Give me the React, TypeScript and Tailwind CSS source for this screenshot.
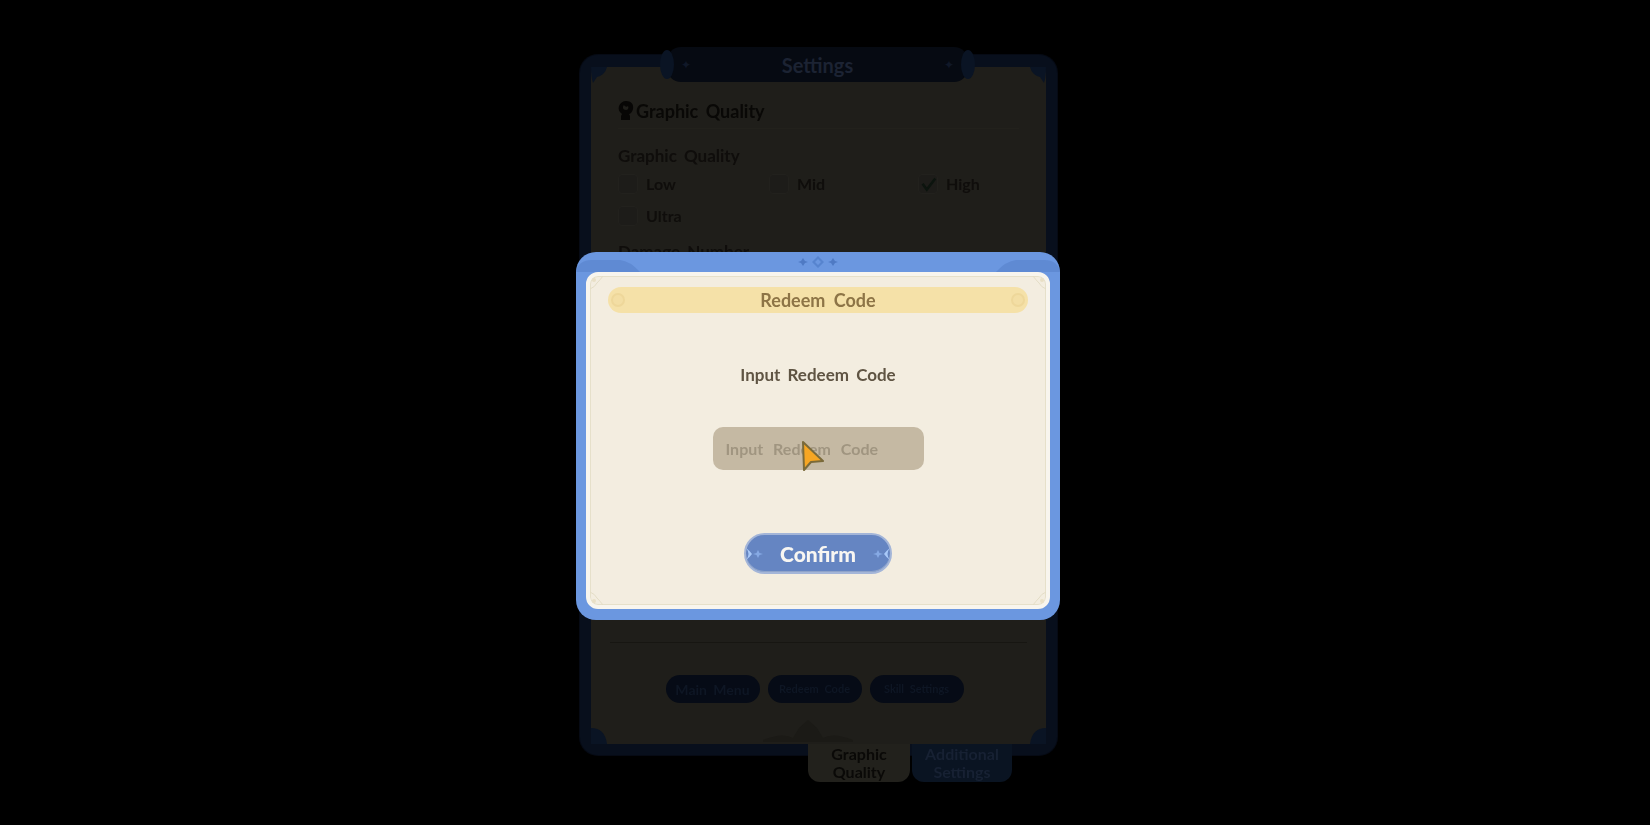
import React from "react";

function Check({ label, checked }: { label: string; checked?: boolean }) {
  return (
    <div className="flex items-center gap-[8px]">
      <div className="relative h-[20px] w-[20px] rounded-[4px] bg-[#1d1c19] border border-[#22211d]">
        {checked && (
          <svg viewBox="0 0 20 20" className="absolute left-[1px] top-[1px] h-[17px] w-[17px]">
            <path d="M3 9 L8 16 L18 3" stroke="#0c140e" strokeWidth="3" fill="none" />
          </svg>
        )}
      </div>
      <span className="text-[16px] font-bold text-[#0f0d0b] [word-spacing:3px]">{label}</span>
    </div>
  );
}

function SmallButton({ label, size }: { label: string; size: string }) {
  return (
    <div className={`flex h-[28px] w-[94px] items-center justify-center rounded-full bg-[#060b16] font-bold text-[#0e1624] [word-spacing:3px] ${size}`}>
      {label}
    </div>
  );
}

function TopCorner({ className }: { className: string }) {
  return (
    <svg viewBox="0 0 16 16" className={`absolute h-[16px] w-[16px] ${className}`}>
      <path d="M0 0 L16 0 Q14 8 6 10 L2 16 Q0 10 0 0 Z" fill="#0a1424" />
    </svg>
  );
}

function BottomCorner({ className }: { className: string }) {
  return (
    <svg viewBox="0 0 16 16" className={`absolute h-[16px] w-[16px] ${className}`}>
      <path d="M0 0 Q14 0 16 16 L0 16 Z" fill="#0a1424" />
    </svg>
  );
}

function FrameCorner({ className }: { className: string }) {
  return (
    <svg viewBox="0 0 14 14" className={`pointer-events-none absolute h-[14px] w-[14px] ${className}`}>
      <path d="M0 13 Q5 11 7 7 Q10 4 13 0" stroke="#e4ddc6" strokeWidth="1" fill="none" />
      <circle cx="4" cy="4" r="2" fill="#e9dfc6" />
    </svg>
  );
}

function Sparkle({ flip }: { flip?: boolean }) {
  return (
    <svg viewBox="0 0 20 14" className={`h-[14px] w-[20px] ${flip ? "-scale-x-100" : ""}`}>
      <path d="M0 1 Q5 7 0 13 Q4 10 6 7 Q4 4 0 1 Z" fill="#a9c9f8" />
      <path d="M12 3 L13.5 6 L17 7 L13.5 8 L12 11 L10.500 8 L7 7 L10.500 6 Z" fill="#86a9e4" />
    </svg>
  );
}

export default function App() {
  return (
    <div className="relative h-[825px] w-full overflow-hidden bg-black font-['Lato',sans-serif]">
      {/* Dimmed settings window */}
      <div className="flex h-full justify-center pr-[13px]">
        <div className="relative mt-[55px] flex h-[700px] w-[477px] flex-col rounded-[18px] border-x-[11px] border-b-[11px] border-t-[12px] border-[#080f1c] bg-[#1f1e1a] shadow-[0_0_0_1px_#060a14] blur-[0.6px]">
          <TopCorner className="left-0 top-0" />
          <TopCorner className="right-0 top-0 -scale-x-100" />
          <BottomCorner className="bottom-0 left-0" />
          <BottomCorner className="bottom-0 right-0 -scale-x-100" />

          <div className="absolute -top-[20px] left-[76px] flex h-[35px] w-[301px] items-center justify-between rounded-[14px] bg-[#060a12] px-[14px]">
            <span className="absolute -left-[7px] top-[3px] h-[29px] w-[14px] rounded-[50%] bg-[#0a1424]" />
            <span className="text-[12px] text-[#101828]">✦</span>
            <span className="text-[20px] font-bold text-[#1c2333]">Settings</span>
            <span className="text-[12px] text-[#101828]">✦</span>
            <span className="absolute -right-[7px] top-[3px] h-[29px] w-[14px] rounded-[50%] bg-[#0a1424]" />
          </div>

          <div className="flex flex-1 flex-col px-[27px]">
            <div className="mt-[33px] flex items-center gap-[2px] border-b border-[#22211c] pb-[6px]">
              <svg viewBox="0 0 16 20" className="h-[20px] w-[16px]">
                <path d="M8 0 C13 0 16 3 15 8 C14.500 11 12 13 11 13 L12 15 L12 19 L3 19 L3 15 L4 13 C1 11 0 8 1 5 C2 2 5 0 8 0 Z M6 4 C4 6 5 9 8 9 C10 9 11 7 10 5 C9 6 7 6 6 4 Z" fill="#070605" fillRule="evenodd" />
              </svg>
              <span className="text-[18px] font-bold leading-[22px] text-[#090806] [word-spacing:3px]">Graphic Quality</span>
            </div>

            <div className="mt-[17px] text-[17px] font-bold leading-[20px] text-[#0f0d0b] [word-spacing:3px]">Graphic Quality</div>
            <div className="mt-[6px] grid grid-cols-[151px_149px_1fr] gap-y-[8px]">
              <Check label="Low" />
              <Check label="Mid" />
              <Check label="High" checked />
              <Check label="Ultra" />
            </div>
            <div className="mt-[14px] text-[17px] font-bold leading-[20px] text-[#0f0d0b] [word-spacing:3px]">Damage Number</div>

            <div className="mx-[-8px] mt-auto border-t border-[#171612]" />
            <div className="mb-[41px] mt-[32px] flex justify-center gap-[8px] pr-[8px]">
              <SmallButton label="Main Menu" size="text-[14px]" />
              <SmallButton label="Redeem Code" size="text-[11px]" />
              <SmallButton label="Skill Settings" size="text-[11px]" />
            </div>
          </div>

          <svg viewBox="0 0 90 24" className="absolute bottom-[2px] left-[172px] h-[24px] w-[90px]">
            <path d="M0 22 Q20 14 30 20 L36 10 L45 2 L54 10 L60 20 Q70 14 90 22 L90 24 L0 24 Z" fill="#1b1a16" />
          </svg>

          <div className="absolute -bottom-[38px] left-[217px] flex gap-[2px] text-center text-[16px] font-bold leading-[18px]">
            <div className="flex h-[38px] w-[102px] items-center justify-center rounded-b-[12px] bg-[#22211c] text-[#0a0907]">
              Graphic<br />Quality
            </div>
            <div className="flex h-[38px] w-[100px] items-center justify-center rounded-b-[12px] bg-[#0a1422] text-[#172133]">
              Additional<br />Settings
            </div>
          </div>
        </div>
      </div>

      {/* Redeem Code dialog */}
      <div className="absolute left-[576px] top-[252px] flex h-[368px] w-[484px] flex-col overflow-hidden rounded-[20px] bg-[#6b97e0] px-[10px] pb-[11px] pt-[20px] blur-[0.5px]">
        <svg viewBox="0 0 484 20" className="absolute left-0 top-0 h-[20px] w-[484px]">
          <path d="M0 20 L0 20 Q2 8 16 8 L44 8 Q54 9 64 20 Z" fill="#5f8ad3" />
          <path d="M484 20 L484 20 Q482 8 468 8 L440 8 Q430 9 420 20 Z" fill="#5f8ad3" />
          <path d="M227 6 L229 9 L232 10 L229 11 L227 14 L225 11 L222 10 L225 9 Z" fill="#4f7ac4" />
          <path d="M242 4 L248 10 L242 16 L236 10 Z M242 7 L239 10 L242 13 L245 10 Z" fill="#5784cf" fillRule="evenodd" />
          <path d="M257 6 L259 9 L262 10 L259 11 L257 14 L255 11 L252 10 L255 9 Z" fill="#4f7ac4" />
        </svg>

        <div className="relative flex flex-1 flex-col items-center rounded-[12px] border-[4px] border-[#f8f5ee] bg-[#f3ede0] shadow-[inset_0_0_0_1px_#e6e0ca]">
          <FrameCorner className="left-0 top-0" />
          <FrameCorner className="right-0 top-0 -scale-x-100" />
          <FrameCorner className="bottom-0 left-0 -scale-y-100" />
          <FrameCorner className="bottom-0 right-0 -scale-100" />

          <div className="mt-[11px] flex h-[26px] w-[420px] items-center justify-between rounded-full bg-[#f5e1a8] px-[3px]">
            <span className="h-[14px] w-[14px] rounded-full border-2 border-[#eed79a] bg-[#f3dea4]" />
            <span className="text-[18px] font-bold text-[#8d7446] [word-spacing:4px]">Redeem Code</span>
            <span className="h-[14px] w-[14px] rounded-full border-2 border-[#eed79a] bg-[#f3dea4]" />
          </div>

          <div className="mt-[50px] text-[17px] font-bold leading-[24px] text-[#5f5443] [word-spacing:3px]">Input Redeem Code</div>

          <div className="mt-[40px] flex h-[43px] w-[211px] items-center rounded-[10px] bg-[#c5b9a3] px-[13px] text-[16px] font-bold text-[#a09580] [word-spacing:6px]">
            Input Redeem Code
          </div>

          <div className="mt-[63px] flex h-[41px] w-[148px] items-center justify-between rounded-full border-2 border-[#a3b5d8] bg-[#6585c2] shadow-[inset_0_-1px_0_#8ea3c9]">
            <Sparkle />
            <span className="text-[21px] font-black text-[#f8f6f2]">Confirm</span>
            <Sparkle flip />
          </div>
        </div>
      </div>

      {/* Mouse pointer */}
      <svg viewBox="0 0 24 32" className="absolute left-[801px] top-[440px] h-[32px] w-[24px] blur-[0.3px]">
        <path d="M2 2 L22 21 L10 22 L3 30 Z" fill="#f6a623" stroke="#7a6a3a" strokeWidth="2" strokeLinejoin="round" />
      </svg>
    </div>
  );
}
